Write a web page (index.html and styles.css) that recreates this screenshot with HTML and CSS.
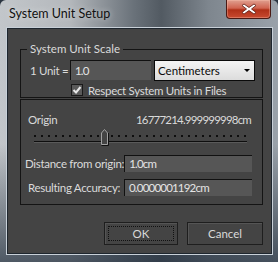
FILE: index.html
```html
<!DOCTYPE html>
<html>
<head>
<meta charset="utf-8">
<link rel="stylesheet" href="styles.css">
</head>
<body>
<div class="window">
  <div class="titlebar">
    <span class="title">System Unit Setup</span>
    <div class="close">
      <svg width="16" height="12" viewBox="0 0 16 12">
        <path d="M3 1 L8 4.5 L13 1 L15 2.5 L10.5 6 L15 9.5 L13 11 L8 7.5 L3 11 L1 9.5 L5.5 6 L1 2.5 Z" fill="#fff" stroke="#5a1a10" stroke-width="0.8"/>
      </svg>
    </div>
  </div>
  <div class="client">
    <fieldset class="group">
      <legend>System Unit Scale</legend>
      <div class="row unit-row">
        <span class="lbl unit-lbl">1 Unit =</span>
        <div class="field unit-field num">1.0</div>
        <div class="dropdown"><span>Centimeters</span><span class="arrow"></span></div>
      </div>
      <div class="row check-row">
        <span class="check">
          <svg width="10" height="10" viewBox="0 0 10 10"><path d="M1.5 5 L4 7.5 L8.5 2" fill="none" stroke="#e8e8e8" stroke-width="2"/></svg>
        </span>
        <span class="lbl">Respect System Units in Files</span>
      </div>
    </fieldset>
    <div class="panel">
      <div class="row origin-row">
        <span class="lbl">Origin</span>
        <span class="lbl num">16777214.999999998cm</span>
      </div>
      <div class="slider">
        <div class="dots"></div>
        <div class="track"></div>
        <svg class="thumb" width="8" height="17" viewBox="0 0 8 17">
          <path d="M0.5 4 L3.5 0.5 L6.5 4 L6.5 15.5 L0.5 15.5 Z" fill="#444" stroke="#a0a0a0" stroke-width="1"/>
          <path d="M7.5 4 L7.5 16.5 L0.5 16.5" fill="none" stroke="#111" stroke-width="1"/>
        </svg>
      </div>
      <div class="row field-row dist-row">
        <span class="lbl">Distance from origin:</span>
        <div class="field wide num">1.0cm</div>
      </div>
      <div class="row field-row acc-row">
        <span class="lbl">Resulting Accuracy:</span>
        <div class="field wide num">0.0000001192cm</div>
      </div>
    </div>
    <div class="buttons">
      <div class="btn ok"><span class="focus">OK</span></div>
      <div class="btn cancel">Cancel</div>
    </div>
  </div>
</div>
</body>
</html>
```

FILE: styles.css
```css
html, body {
  margin: 0;
  padding: 0;
  width: 278px;
  height: 262px;
  overflow: hidden;
  background: #2a3440;
}
.window {
  width: 278px;
  height: 262px;
  box-sizing: border-box;
  padding: 0 6px 8px 7px;
  display: flex;
  flex-direction: column;
  background:
    linear-gradient(180deg, rgba(40,52,66,0) 0%, rgba(40,52,66,0) 55%, rgba(40,52,66,0.75) 100%),
    linear-gradient(90deg, #c2c6ca 0%, #b4b8bc 25%, #6a727a 48%, #525a62 58%, #7e868e 75%, #9aa2aa 100%);
  border-radius: 6px 6px 0 0;
  font-family: "Lato", "Noto Sans", sans-serif;
}
.titlebar {
  height: 28px;
  display: flex;
  align-items: flex-start;
  justify-content: space-between;
  flex-shrink: 0;
}
.title {
  margin-top: 6px;
  margin-left: 2px;
  font-size: 12.5px;
  color: #111;
  text-shadow: 0 0 6px rgba(255,255,255,0.6);
}
.close {
  width: 45px;
  height: 19px;
  margin-right: 1px;
  box-sizing: border-box;
  border: 1px solid #4a1a14;
  border-top: none;
  border-radius: 0 0 4px 4px;
  background: linear-gradient(#e0a090 0%, #d06450 45%, #b03018 55%, #c84a30 100%);
  box-shadow: inset 0 0 0 1px rgba(255,200,180,0.35);
  display: flex;
  align-items: center;
  justify-content: center;
}
.client {
  flex: 1;
  background: #444444;
  border: 1px solid #1e262e;
  box-shadow: 0 0 0 1px #c8d0d8;
  padding: 13px 8px 0 12px;
  display: flex;
  flex-direction: column;
  color: #dadada;
  font-size: 11.5px;
  letter-spacing: -0.3px;
}
.lbl {
  color: #dadada;
  white-space: nowrap;
}
.num {
  letter-spacing: -0.8px;
}
.group {
  margin: 0;
  padding: 4px 0 1px 9px;
  border: 1px solid #141414;
  min-width: 0;
}
.group legend {
  padding: 0 3px;
  margin-left: -3px;
  color: #dadada;
  line-height: 14px;
  height: 14px;
  letter-spacing: 0;
}
.row {
  display: flex;
  align-items: center;
}
.unit-row {
  height: 20px;
}
.unit-lbl {
  width: 40px;
}
.field {
  background: #565656;
  border-top: 1px solid #111;
  border-left: 1px solid #111;
  box-sizing: border-box;
  color: #e4e4e4;
  padding-left: 4px;
  line-height: 16px;
  white-space: nowrap;
}
.unit-field {
  width: 81px;
  height: 20px;
  line-height: 19px;
}
.dropdown {
  width: 101px;
  height: 21px;
  margin-left: 3px;
  box-sizing: border-box;
  border: 1px solid #0a0a0a;
  background: linear-gradient(#f4f4f4, #dcdcdc);
  color: #0a0a0a;
  display: flex;
  align-items: center;
  justify-content: space-between;
  padding: 0 4px 0 3px;
  letter-spacing: 0;
}
.arrow {
  width: 0;
  height: 0;
  border-left: 3px solid transparent;
  border-right: 3px solid transparent;
  border-top: 3px solid #000;
}
.check-row {
  margin-top: 4px;
  margin-left: 41px;
  height: 12px;
}
.check {
  width: 12px;
  height: 12px;
  box-sizing: border-box;
  border: 1px solid #1a1a1a;
  background: #5a5a5a;
  display: flex;
  align-items: center;
  justify-content: center;
  margin-right: 5px;
}
.panel {
  margin-top: 1px;
  border: 1px solid #141414;
  height: 106px;
  box-sizing: border-box;
  padding: 11px 11px 0 7px;
  flex-shrink: 0;
}
.origin-row {
  justify-content: space-between;
  height: 16px;
}
.slider {
  position: relative;
  margin: 0 3px 0 6px;
  height: 23px;
}
.dots {
  position: absolute;
  left: 0;
  right: 0;
  top: 8px;
  height: 2px;
  background: repeating-linear-gradient(90deg, #0e0e0e 0 2px, transparent 2px 7px);
}
.track {
  position: absolute;
  left: 0;
  right: 1px;
  top: 14px;
  height: 1px;
  background: #0e0e0e;
  box-shadow: 0 1px 0 #5a5a5a;
}
.thumb {
  position: absolute;
  left: 67px;
  top: 2px;
}
.field-row {
  justify-content: space-between;
  height: 22px;
  margin-right: -1px;
}
.dist-row {
  margin-top: 2px;
  margin-left: -3px;
}
.acc-row {
  margin-top: 2px;
}
.wide {
  width: 128px;
  height: 17px;
}
.buttons {
  display: flex;
  justify-content: flex-end;
  gap: 9px;
  margin-top: 17px;
}
.btn {
  height: 23px;
  box-sizing: border-box;
  border: 1px solid #1e1e1e;
  box-shadow: inset 1px 1px 0 #555;
  background: #444;
  color: #dadada;
  display: flex;
  align-items: center;
  justify-content: center;
  letter-spacing: 0;
}
.ok {
  width: 74px;
  padding: 3px;
}
.cancel {
  width: 76px;
}
.focus {
  flex: 1;
  align-self: stretch;
  border: 1px dotted #111;
  display: flex;
  align-items: center;
  justify-content: center;
}
```
